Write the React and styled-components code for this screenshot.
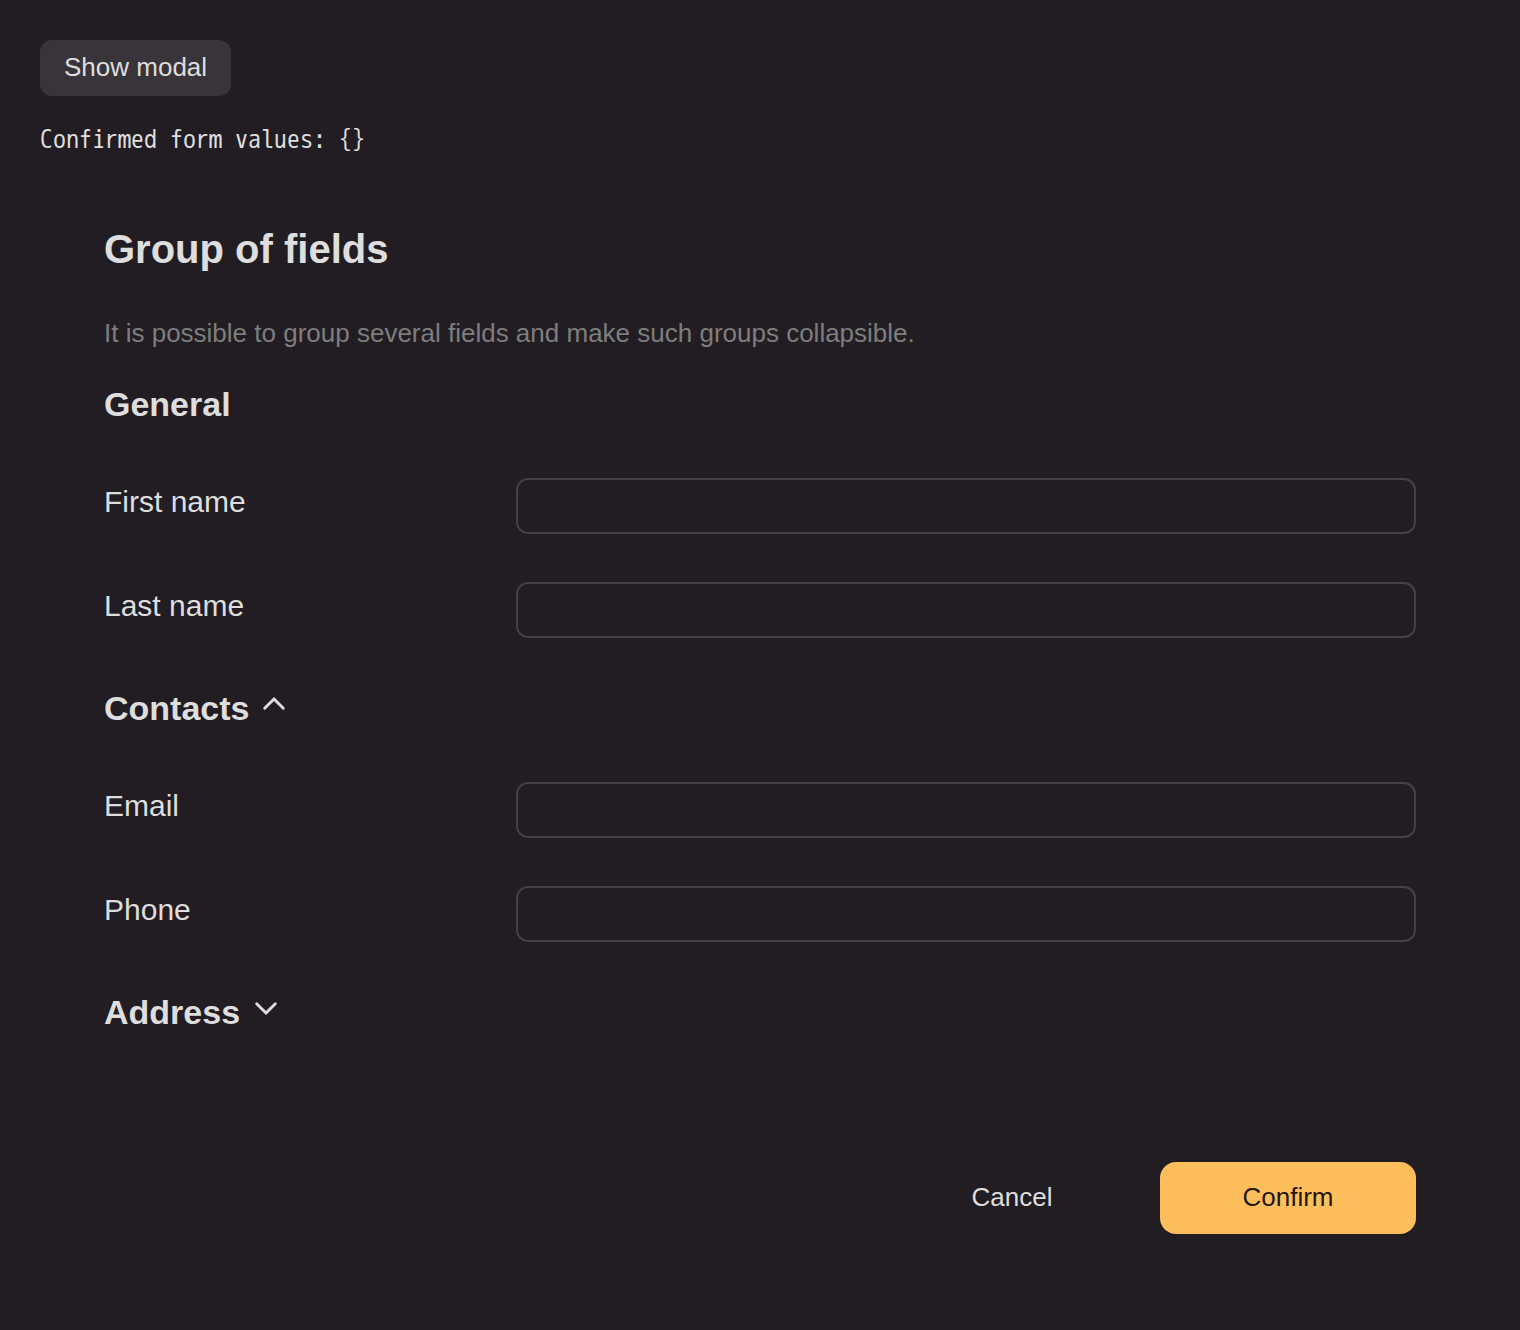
import React, { useState } from "react";
import styled, { createGlobalStyle } from "styled-components";

const GlobalStyle = createGlobalStyle`
  *, *::before, *::after { box-sizing: border-box; }
  body {
    margin: 0;
    background: #221d22;
    color: #dedede;
    font-family: "Liberation Sans", Arial, sans-serif;
    font-size: 26px;
    line-height: 34px;
  }
`;

const Page = styled.main`
  padding: 40px;
`;

const Button = styled.button`
  border: 0;
  padding: 0 24px 2px;
  font: inherit;
  color: inherit;
  cursor: pointer;
  background: transparent;
`;

const ShowButton = styled(Button)`
  display: block;
  height: 56px;
  border-radius: 12px;
  background: #393439;
`;

const Values = styled.pre`
  margin: 24px 0 0;
  font-family: "WenQuanYi Zen Hei Mono", "Noto Sans Mono CJK SC", "Noto Sans CJK SC", monospace;
  font-size: 26px;
  line-height: 40px;
`;

const Form = styled.form`
  padding: 58px 64px 64px;
`;

const Title = styled.h1`
  margin: 0;
  font-size: 40px;
  line-height: 62px;
`;

const Description = styled.p`
  margin: 36px 0 0;
  color: #7e7d7e;
`;

const Group = styled.section`
  display: flex;
  flex-direction: column;
  gap: 48px;
  margin-top: ${(p) => (p.$first ? "32px" : "48px")};
`;

const GroupTitle = styled.h2`
  margin: 0;
  padding-bottom: 4px;
  font-size: 34px;
  line-height: 44px;
`;

const Toggle = styled(Button)`
  display: flex;
  gap: 10px;
  padding: 0;
`;

const Chevron = styled.svg`
  width: 32px;
  height: 32px;
  margin-top: 2px;
`;

const Row = styled.div`
  display: grid;
  grid-template-columns: 360px minmax(0, 1fr);
  column-gap: 52px;
`;

const Label = styled.label`
  font-size: 30px;
  line-height: 48px;
`;

const Input = styled.input`
  width: 100%;
  height: 56px;
  padding: 0 16px;
  border: 2px solid #444044;
  border-radius: 12px;
  background: transparent;
  color: inherit;
  font: inherit;
`;

const Footer = styled.footer`
  display: flex;
  justify-content: flex-end;
  gap: 20px;
  margin-top: 124px;
`;

const Action = styled(Button)`
  width: 256px;
  height: 72px;
  border-radius: 16px;
  background: ${(p) => (p.$primary ? "#ffbe5c" : "transparent")};
  color: ${(p) => (p.$primary ? "rgba(0, 0, 0, 0.9)" : "inherit")};
`;

function Field({ id, label }) {
  return (
    <Row>
      <Label htmlFor={id}>{label}</Label>
      <Input id={id} name={id} />
    </Row>
  );
}

function FieldGroup({ title, fields, first, collapsible, initiallyOpen = true }) {
  const [open, setOpen] = useState(initiallyOpen);
  return (
    <Group $first={first}>
      <GroupTitle>
        {collapsible ? (
          <Toggle type="button" aria-expanded={open} onClick={() => setOpen(!open)}>
            {title}
            <Chevron viewBox="0 0 32 32" fill="none" aria-hidden="true">
              <path
                d={open ? "M5.7 20.3 15 11l9.3 9.3" : "M6.7 11.7 16 21l9.3-9.3"}
                stroke="currentColor"
                strokeWidth="2.9"
                strokeLinecap="round"
                strokeLinejoin="miter"
              />
            </Chevron>
          </Toggle>
        ) : (
          title
        )}
      </GroupTitle>
      {open && fields.map(([id, label]) => <Field key={id} id={id} label={label} />)}
    </Group>
  );
}

export default function App() {
  return (
    <Page>
      <GlobalStyle />
      <ShowButton type="button">Show modal</ShowButton>
      <Values>{"Confirmed form values: {}"}</Values>
      <Form onSubmit={(e) => e.preventDefault()}>
        <Title>Group of fields</Title>
        <Description>
          It is possible to group several fields and make such groups collapsible.
        </Description>
        <FieldGroup
          first
          title="General"
          fields={[["firstName", "First name"], ["lastName", "Last name"]]}
        />
        <FieldGroup
          collapsible
          title="Contacts"
          fields={[["email", "Email"], ["phone", "Phone"]]}
        />
        <FieldGroup
          collapsible
          initiallyOpen={false}
          title="Address"
          fields={[["city", "City"], ["street", "Street"]]}
        />
        <Footer>
          <Action type="button">Cancel</Action>
          <Action type="submit" $primary>Confirm</Action>
        </Footer>
      </Form>
    </Page>
  );
}
